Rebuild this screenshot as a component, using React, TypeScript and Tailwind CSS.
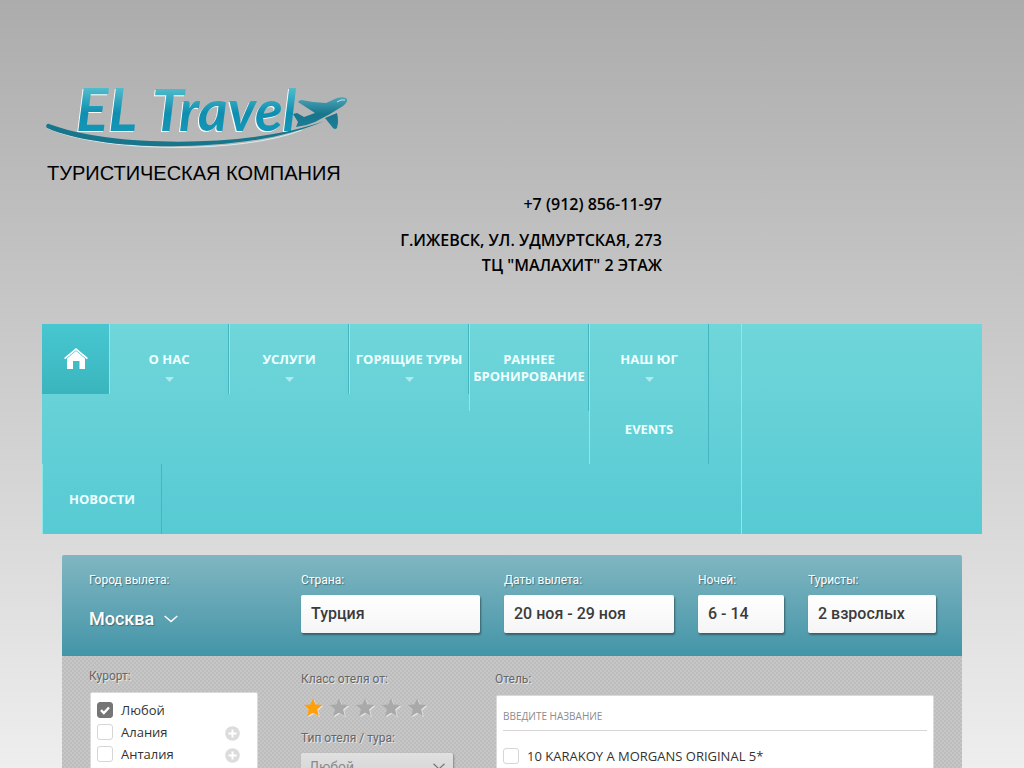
import { useState } from "react";
import type { ReactNode } from "react";

const DIVIDER = "border-l border-l-[#90e6e9] border-r border-r-[#45b5bf]";

function Logo() {
  return (
    <svg viewBox="0 -8 310 88" className="block h-[88px] w-[310px]" role="img" aria-label="EL Travel">
      <defs>
        <linearGradient id="letters" x1="0" y1="8" x2="0" y2="56" gradientUnits="userSpaceOnUse">
          <stop offset="0" stopColor="#5cc3d0" />
          <stop offset="0.6" stopColor="#0f8fb0" />
          <stop offset="1" stopColor="#1496b5" />
        </linearGradient>
        <linearGradient id="plane" x1="0" y1="22" x2="0" y2="54" gradientUnits="userSpaceOnUse">
          <stop offset="0" stopColor="#4aa3b5" />
          <stop offset="0.5" stopColor="#17758c" />
          <stop offset="1" stopColor="#1c7f96" />
        </linearGradient>
      </defs>
      <g fontFamily="Lato, 'Liberation Sans', sans-serif" fontStyle="italic" fontWeight="700">
        <g fill="#ffffff">
          <text x="33" y="56" fontSize="60">EL</text>
          <text x="109" y="56" fontSize="57">Travel</text>
        </g>
        <g fill="url(#letters)">
          <text x="34" y="55" fontSize="60">EL</text>
          <text x="110" y="55" fontSize="57">Travel</text>
        </g>
      </g>
      <path d="M5 52C60 77 200 78 260 54" fill="none" stroke="#d7eef2" strokeWidth="1" />
      <path d="M7 48C5 47 3 50 5 52C60 77 210 78 282 45C210 72 70 72 7 48Z" fill="#17758c" />
      <path
        d="M256 26Q257 24 260 24L271 26L284 27L295 22Q303 20 305 23Q306 26 301 30L288 38L273 46Q264 50 254 51L256 46L251 38L255 37L262 41L273 37Z"
        fill="url(#plane)"
      />
      <path d="M283 42L295 37Q297 45 295 52Q293 54 291 52Z" fill="url(#plane)" />
      <path d="M295 26Q299 23 303 24" fill="none" stroke="#c8e4ea" strokeWidth="1" />
    </svg>
  );
}

function MenuItem({ children, arrow, className = "" }: { children: ReactNode; arrow?: boolean; className?: string }) {
  return (
    <a
      href="#"
      className={`flex min-h-[70px] w-[120px] shrink-0 flex-col items-center pt-[27px] text-center text-[13px] leading-[17px] font-bold text-[#f0ffff] uppercase ${className}`}
    >
      {children}
      {arrow && (
        <svg viewBox="0 0 9 5" className="mt-[9px] h-[5px] w-[9px]" aria-hidden="true">
          <path d="M0 0H9L4.500 5Z" fill="#b0eaee" />
        </svg>
      )}
    </a>
  );
}

function Field({ id, label, value, className }: { id: string; label: string; value: string; className: string }) {
  return (
    <div className={`flex flex-col ${className}`}>
      <label htmlFor={id} className="mb-1.5 text-xs leading-[18px] text-white [text-shadow:1px_1px_1px_#3f6f7a]">
        {label}
      </label>
      <button
        id={id}
        type="button"
        className="h-[38px] rounded-xs bg-linear-to-b from-white to-[#f5f5f5] pl-2.5 text-left text-base font-medium text-[#3b3b3b] shadow-[1px_2px_2px_#37616c]"
      >
        {value}
      </button>
    </div>
  );
}

function Tick({ label, initial = false }: { label: string; initial?: boolean }) {
  const [checked, setChecked] = useState(initial);
  return (
    <label className="flex items-center gap-2 text-[13px] leading-[22px] text-[#333]">
      <span className="relative block size-4">
        <input
          type="checkbox"
          checked={checked}
          onChange={(e) => setChecked(e.target.checked)}
          className="block size-4 appearance-none rounded-[3px] border border-[#d6d6d6] bg-white checked:border-[#757575] checked:bg-[#757575]"
        />
        {checked && (
          <svg viewBox="0 0 16 16" className="pointer-events-none absolute inset-0 size-4" aria-hidden="true">
            <path d="M4 8.200L6.800 11L12 5.500" fill="none" stroke="#fff" strokeWidth="2.400" />
          </svg>
        )}
      </span>
      {label}
    </label>
  );
}

function Expand({ name }: { name: string }) {
  return (
    <button type="button" aria-label={name}>
      <svg viewBox="0 0 15 15" className="mt-[3px] block size-[15px]" aria-hidden="true">
        <circle cx="7.500" cy="7.500" r="7.300" fill="#dcdcdc" />
        <path d="M7.500 3.500V11.500M3.500 7.500H11.500" stroke="#fff" strokeWidth="2" />
      </svg>
    </button>
  );
}

const STAR = "M10 0.500L12.600 6.500L19.300 7.100L14.200 11.500L15.800 18.300L10 14.700L4.200 18.300L5.800 11.500L0.700 7.100L7.400 6.500Z";

function Stars() {
  const [rating, setRating] = useState(1);
  return (
    <div className="flex gap-1.5 pl-0.5">
      {[1, 2, 3, 4, 5].map((n) => (
        <button key={n} type="button" aria-label={`${n}`} onClick={() => setRating(n)}>
          <svg viewBox="0 0 20 20" className="block size-5 overflow-visible" aria-hidden="true">
            <path d={STAR} transform="translate(1 1)" fill="#e6e6e6" />
            <path d={STAR} fill={n <= rating ? "#ff9f0a" : "#a9a9a9"} />
          </svg>
        </button>
      ))}
    </div>
  );
}

const FILTER_LABEL = "block text-xs leading-[18px] text-[#666] [text-shadow:1px_1px_0_#e8e8e8]";

export default function App() {
  return (
    <div className="min-h-screen bg-[#eeeeee] bg-[linear-gradient(#acacac,#eeeeee)] bg-[length:100%_768px] bg-no-repeat font-['Open_Sans','Noto_Sans',sans-serif]">
      <div className="mx-auto w-full max-w-[940px]">
        <header className="pt-[68px] pb-[46px] text-black">
          <a href="#" className="block w-fit">
            <Logo />
            <span className="block pt-1.5 pl-[5px] font-['Liberation_Sans',Arial,sans-serif] text-xl leading-[22px]">
              ТУРИСТИЧЕСКАЯ КОМПАНИЯ
            </span>
          </a>
          <div className="max-w-[620px] pt-2 text-right text-base leading-[25px] font-semibold">
            <p>+7 (912) 856-11-97</p>
            <p className="pt-[11px]">Г.ИЖЕВСК, УЛ. УДМУРТСКАЯ, 273</p>
            <p>ТЦ "МАЛАХИТ" 2 ЭТАЖ</p>
          </div>
        </header>

        <nav className="bg-linear-to-b from-[#6fd6da] to-[#57cad3]">
          <div className="max-w-[700px] border-r border-[#90e6e9]">
            <div className="flex min-h-[140px] items-start">
              <a
                href="#"
                aria-label="Главная"
                className="flex h-[70px] w-[67px] shrink-0 items-center justify-center bg-linear-to-b from-[#48c7d0] to-[#3ab5be]"
              >
                <svg viewBox="0 0 24 22" className="h-[22px] w-6" aria-hidden="true">
                  <path d="M12 0L24 10L22.800 11.200L12 2.200L1.200 11.200L0 10Z" fill="#fff" />
                  <path d="M12 3L21 10.500V21H15.500V13H9V21H3V10.500Z" fill="#fff" />
                </svg>
              </a>
              <MenuItem arrow className={DIVIDER}>О нас</MenuItem>
              <MenuItem arrow className={DIVIDER}>Услуги</MenuItem>
              <MenuItem arrow className={DIVIDER}>Горящие туры</MenuItem>
              <MenuItem className={`${DIVIDER} pb-[26px]`}>Раннее бронирование</MenuItem>
              <div>
                <MenuItem arrow className={DIVIDER}>Наш юг</MenuItem>
                <MenuItem className={DIVIDER}>Events</MenuItem>
              </div>
            </div>
            <MenuItem className={DIVIDER}>Новости</MenuItem>
          </div>
        </nav>

        <main className="mx-5 mt-[21px] overflow-hidden rounded-t-xs font-[Roboto,sans-serif]">
          <section className="flex items-start bg-linear-to-b from-[#80b6c1] to-[#4295a8] pt-4 pr-[26px] pb-[23px] pl-[27px]">
            <div className="flex w-[212px] shrink-0 flex-col items-start">
              <label htmlFor="city" className="mb-4 text-xs leading-[18px] text-white [text-shadow:1px_1px_1px_#3f6f7a]">
                Город вылета:
              </label>
              <button id="city" type="button" className="flex items-center gap-2.5 text-lg font-medium text-white [text-shadow:1px_1px_1px_#3f6f7a]">
                Москва
                <svg viewBox="0 0 14 8" className="h-2 w-3.5" aria-hidden="true">
                  <path d="M0.700 1L7 6.500L13.300 1" fill="none" stroke="#fff" strokeWidth="1.500" />
                </svg>
              </button>
            </div>
            <div className="flex flex-1 gap-6">
              <Field id="country" label="Страна:" value="Турция" className="w-[179px]" />
              <Field id="dates" label="Даты вылета:" value="20 ноя - 29 ноя" className="w-[170px]" />
              <Field id="nights" label="Ночей:" value="6 - 14" className="w-[86px]" />
              <Field id="people" label="Туристы:" value="2 взрослых" className="w-32" />
            </div>
          </section>

          <section className="flex items-start bg-[#c4c4c4] bg-[conic-gradient(#bdbdbd_25%,#c6c6c6_0_50%,#bdbdbd_0_75%,#c6c6c6_0)] bg-[length:4px_4px] pr-7 pb-6 pl-[27px]">
            <div className="w-[212px] pt-[11px]">
              <h2 className={FILTER_LABEL}>Курорт:</h2>
              <div className="mt-[7px] ml-px min-h-[120px] w-[168px] rounded-xs border border-[#dadada] bg-white px-1.5 pt-1.5 font-['Open_Sans',sans-serif]">
                <Tick label="Любой" initial />
                {["Алания", "Анталия"].map((name) => (
                  <div key={name} className="flex items-center justify-between pr-[11px]">
                    <Tick label={name} />
                    <Expand name={name} />
                  </div>
                ))}
              </div>
            </div>
            <div className="w-[194px] pt-3.5">
              <h2 className={`${FILTER_LABEL} mb-2.5`}>Класс отеля от:</h2>
              <Stars />
              <label htmlFor="kind" className={`${FILTER_LABEL} mt-[11px]`}>
                Тип отеля / тура:
              </label>
              <div className="relative mt-1.5 w-[152px]">
                <select
                  id="kind"
                  className="block h-7 w-full appearance-none rounded-xs bg-linear-to-b from-[#e0e0e0] to-[#d4d4d4] pl-2 text-sm text-[#8b8b8b] shadow-[1px_1px_2px_#888]"
                >
                  <option>Любой</option>
                </select>
                <svg viewBox="0 0 12 7" className="pointer-events-none absolute top-2.5 right-2 h-[7px] w-3" aria-hidden="true">
                  <path d="M0.500 0.700L6 6L11.500 0.700" fill="none" stroke="#777" strokeWidth="1.200" />
                </svg>
              </div>
            </div>
            <div className="flex-1 pt-3.5">
              <h2 className={FILTER_LABEL}>Отель:</h2>
              <div className="mt-[7px] ml-px min-h-[120px] rounded-xs border border-[#dadada] bg-white px-1.5 pt-1.5 font-['Open_Sans',sans-serif]">
                <input
                  type="text"
                  aria-label="Отель"
                  placeholder="ВВЕДИТЕ НАЗВАНИЕ"
                  className="mb-3.5 block h-[29px] w-full border-b border-[#d6d6d6] text-[10px] text-[#333] outline-none placeholder:text-[#8c8c8c]"
                />
                <Tick label="10 KARAKOY A MORGANS ORIGINAL 5*" />
              </div>
            </div>
          </section>
        </main>
      </div>
    </div>
  );
}
